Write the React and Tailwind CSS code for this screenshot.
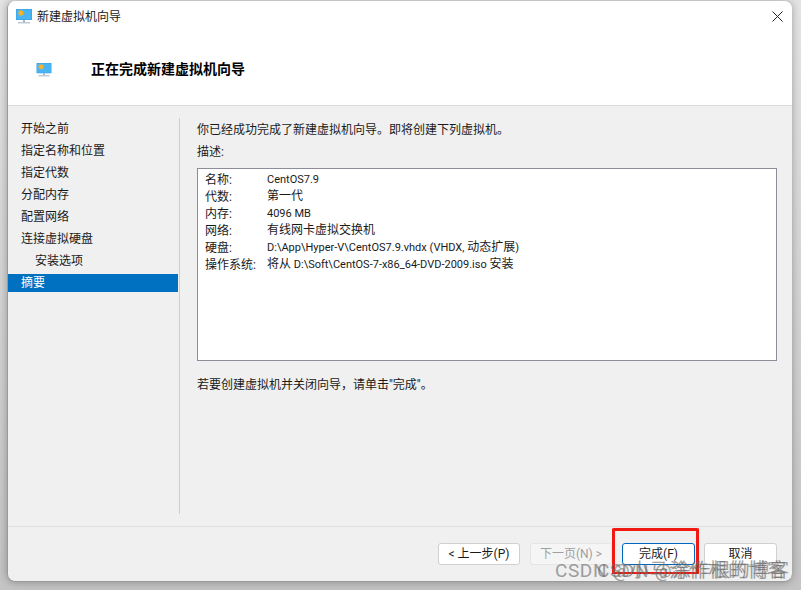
const navItems = [
  { label: "开始之前" },
  { label: "指定名称和位置" },
  { label: "指定代数" },
  { label: "分配内存" },
  { label: "配置网络" },
  { label: "连接虚拟硬盘" },
  { label: "安装选项", sub: true },
  { label: "摘要", active: true },
];

const summary = [
  ["名称:", "CentOS7.9"],
  ["代数:", "第一代"],
  ["内存:", "4096 MB"],
  ["网络:", "有线网卡虚拟交换机"],
  ["硬盘:", "D:\\App\\Hyper-V\\CentOS7.9.vhdx (VHDX, 动态扩展)"],
  ["操作系统:", "将从 D:\\Soft\\CentOS-7-x86_64-DVD-2009.iso 安装"],
];

// latin runs are set a bit smaller than the CJK ones
const Mixed = ({ text }) =>
  text.split(/([\u4e00-\u9fff]+)/).map((part, i) =>
    i % 2 ? (
      <span key={i}>{part}</span>
    ) : (
      <span key={i} className="whitespace-pre text-[11px]">
        {part}
      </span>
    )
  );

const MonitorIcon = ({ className }) => (
  <svg className={className} viewBox="0 0 16 15">
    <rect x="0" y="0" width="16" height="11" fill="#2f9fe8" />
    <rect x="0.5" y="0.5" width="15" height="10" fill="#49b4f2" />
    <circle cx="5" cy="4" r="2.4" fill="#f5b32c" />
    <path d="M5 0.6V7.4M1.6 4H8.4M2.6 1.6L7.4 6.4M7.4 1.6L2.6 6.4" stroke="#f5b32c" strokeWidth="0.8" />
    <rect x="7" y="11" width="2" height="2" fill="#9fb3c2" />
    <rect x="2" y="13" width="12" height="1.4" fill="#b9c6cf" />
  </svg>
);

const Button = ({ children, className = "" }) => (
  <div
    className={
      "flex h-[22px] items-center justify-center rounded-[3px] border text-[12px] leading-none " +
      className
    }
  >
    {children}
  </div>
);

export default function App() {
  return (
    <div
      className="relative h-[590px] w-[801px] overflow-hidden bg-gradient-to-b from-[#e4e4e4] to-[#c4c4c4] pl-[7px] pt-px text-[#1a1a1a]"
      style={{ fontFamily: 'Roboto, "Noto Sans CJK SC", sans-serif' }}
    >
      <div className="flex h-[581px] w-[785px] flex-col overflow-hidden rounded-lg border-b border-l border-[#9a9a9a] bg-[#f0f0f0] shadow-[0_0_8px_rgba(0,0,0,0.3)]">
        {/* title + header */}
        <div className="h-[105px] shrink-0 border-b border-[#dcdcdc] bg-white">
          <div className="flex h-[31px] items-center pl-2">
            <MonitorIcon className="h-[15px] w-4" />
            <span className="ml-[5px] text-[12px]">新建虚拟机向导</span>
            <svg className="ml-auto mr-[9px] h-[11px] w-[11px]" viewBox="0 0 11 11">
              <path d="M0.5 0.5L10.5 10.5M10.5 0.5L0.5 10.5" stroke="#222" strokeWidth="1" />
            </svg>
          </div>
          <div className="mt-[15px] flex h-[45px] items-center pl-7">
            <MonitorIcon className="h-[14px] w-4" />
            <span className="ml-[39px] text-[14px] font-bold text-black">正在完成新建虚拟机向导</span>
          </div>
        </div>

        {/* body */}
        <div className="flex h-[421px] shrink-0 border-b border-[#dfdfdf]">
          <div className="w-[171px] shrink-0 pr-px pt-[14px]">
            {navItems.map((item) => (
              <div
                key={item.label}
                className={
                  "mb-1 flex h-[18px] items-center text-[12px] " +
                  (item.active ? "bg-[#0070c0] text-white " : "") +
                  (item.sub ? "pl-[27px]" : "pl-[13px]")
                }
              >
                {item.label}
              </div>
            ))}
          </div>
          <div className="mt-3 mb-3 w-px shrink-0 bg-[#cfcfcf]" />
          <div className="ml-[17px] w-[580px] shrink-0 pt-[15px] text-[12px]">
            <div className="flex h-[18px] items-center">你已经成功完成了新建虚拟机向导。即将创建下列虚拟机。</div>
            <div className="mt-[4px] flex h-[18px] items-center">描述:</div>
            <div className="mt-[7px] h-[193px] border border-[#8d8d99] bg-white pl-[7px] pt-[2px]">
              {summary.map(([k, v]) => (
                <div key={k} className="flex h-[17px] items-center whitespace-nowrap">
                  <span className="w-[62px] shrink-0">{k}</span>
                  <span>
                    <Mixed text={v} />
                  </span>
                </div>
              ))}
            </div>
            <div className="mt-[15px] flex h-[18px] items-center">若要创建虚拟机并关闭向导，请单击"完成"。</div>
          </div>
        </div>

        {/* footer */}
        <div className="flex flex-1 items-start justify-end gap-[9px] pr-[15px] pt-[16px]">
          <Button className="mr-px w-[82px] border-[#d0d0d0] bg-white">&lt; 上一步(P)</Button>
          <Button className="mr-px w-[82px] border-[#e5e5e5] bg-[#f5f5f5] text-[#a0a0a0]">下一页(N) &gt;</Button>
          <Button className="w-[73px] border-[#0067c0] bg-white">完成(F)</Button>
          <Button className="w-[73px] border-[#d0d0d0] bg-white">取消</Button>
        </div>
      </div>

      {/* red highlight drawn over the screenshot */}
      <div className="absolute left-[612px] top-[528px] h-[46px] w-[87px] rounded-[2px] border-[3px] border-b-0 border-[#f01a12]" />
      <div className="absolute left-[612px] top-[572px] h-[2px] w-[87px] bg-[#f01a12]" />

      {/* doubled watermark */}
      <div className="absolute left-[555px] top-[557px] whitespace-nowrap text-[19px] tracking-[0.6px] text-[#666] opacity-60">CSDN @小马涂作根的博客</div>
      <div className="absolute left-[597px] top-[557px] whitespace-nowrap text-[19px] tracking-[0.6px] text-[#666] opacity-60">CSDN @涂作根的博客</div>
    </div>
  );
}
